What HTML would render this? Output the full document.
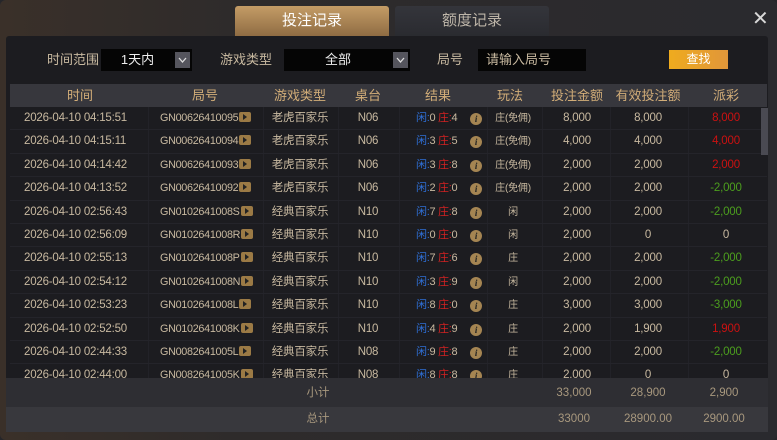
<!DOCTYPE html>
<html><head><meta charset="utf-8"><style>
*{margin:0;padding:0;box-sizing:border-box}
body{width:777px;height:440px;overflow:hidden;background:#26262a;font-family:"Liberation Sans","Noto Sans CJK SC",sans-serif;position:relative}
.outer{position:absolute;left:0;top:0;width:777px;height:440px;background:linear-gradient(90deg,#3a3029 0%,#2e2b2b 30%,#2a2a2e 100%);border-radius:6px}
.tab{position:absolute;top:6px;height:30px;width:154px;text-align:center;line-height:30px;font-size:15px;border-radius:3px 3px 0 0}
.t1{left:235px;background:linear-gradient(#c49c66,#8f6c43);color:#fff}
.t2{left:395px;background:linear-gradient(#34353b,#2a2b30);color:#bdb5a8}
.close{position:absolute;left:752px;top:6px;color:#d8d8d8;font-size:20px}
.inner{position:absolute;left:6px;top:36px;width:762px;height:396px;background:#1c1c20;border-radius:3px}
.lbl{position:absolute;top:51px;font-size:13px;color:#c8b9a0;line-height:17px}
.sel{position:absolute;top:49px;height:22px;background:#050505;color:#eee;font-size:13px;line-height:22px;text-align:center}
.dd{position:absolute;top:3px;right:2px;width:15px;height:16px;background:#55555d}
.dd svg{position:absolute;left:3px;top:5px}
.btn{position:absolute;left:669px;top:50px;width:59px;height:19px;background:linear-gradient(90deg,#efab1e,#e0963a);color:#fff;font-size:12px;text-align:center;line-height:19px}
.hdr{position:absolute;left:10px;top:84px;width:757px;height:23px;background:#37373d}
.hdr span{position:absolute;top:3px;font-size:13px;line-height:17px;color:#d2ad78;transform:translateX(-50%);white-space:nowrap}
.body{position:absolute;left:10px;top:107px;width:757px;height:271px;overflow:hidden}
.row{position:relative;height:23.4px;border-bottom:1px solid #24242a;font-size:11.5px;color:#c8b9a0;letter-spacing:-0.2px}
.row span{position:absolute;top:4px;line-height:15px;white-space:nowrap}
.c{transform:translateX(-50%)}
.gn{font-size:10.8px;letter-spacing:-0.3px}
.ic{display:inline-block;width:12px;height:10px;background:#9b7a45;border-radius:2px;vertical-align:-1px;position:relative;margin-left:1px}
.ic:after{content:"";position:absolute;left:4px;top:2px;border-left:4px solid #222;border-top:3px solid transparent;border-bottom:3px solid transparent}
.info{display:inline-block;width:12px;height:12px;border-radius:50%;background:#a58552;color:#222;font-size:9px;font-style:italic;font-weight:bold;text-align:center;line-height:12px;font-family:"Liberation Serif",serif;vertical-align:-1px}
.b{color:#2f6fd6;font-weight:normal}.r{color:#d42222;font-weight:normal}.g{color:#4c9e1e}.rd{color:#cc1111}
.res{font-size:11px;letter-spacing:-0.3px}
.sm{font-size:10px}
.vl{position:absolute;top:107px;width:1px;height:271px;background:#222228}
.scroll{position:absolute;left:761px;top:108px;width:7px;height:47px;background:#4a4a52}
.sub{position:absolute;left:6px;top:378px;width:762px;height:29px;background:#2e2e33}
.tot{position:absolute;left:6px;top:407px;width:762px;height:25px;background:#38383d}
.sub span,.tot span{position:absolute;font-size:11.5px;line-height:15px;color:#a8987e;transform:translateX(-50%)}
.sub span{top:8px}.tot span{top:5px}
</style></head><body>
<div class="outer"></div>
<div class="tab t1">投注记录</div>
<div class="tab t2">额度记录</div>
<div class="close">✕</div>
<div class="inner"></div>
<div class="lbl" style="left:47px">时间范围</div>
<div class="sel" style="left:101px;width:91px;padding-right:18px">1天内<div class="dd"><svg width="9" height="6"><path d="M1 1L4.5 5L8 1" stroke="#ddd" fill="none" stroke-width="1.3"/></svg></div></div>
<div class="lbl" style="left:220px">游戏类型</div>
<div class="sel" style="left:284px;width:126px;padding-right:18px">全部<div class="dd"><svg width="9" height="6"><path d="M1 1L4.5 5L8 1" stroke="#ddd" fill="none" stroke-width="1.3"/></svg></div></div>
<div class="lbl" style="left:437px">局号</div>
<div class="sel" style="left:478px;width:108px;text-align:left;padding-left:8px;color:#c8b9a0">请输入局号</div>
<div class="btn">查找</div>
<div class="hdr">
<span style="left:70px">时间</span><span style="left:195px">局号</span><span style="left:290px">游戏类型</span><span style="left:358px">桌台</span><span style="left:428px">结果</span><span style="left:500px">玩法</span><span style="left:567px">投注金额</span><span style="left:638px">有效投注额</span><span style="left:716px">派彩</span>
</div>
<div class="vl" style="left:148px"></div><div class="vl" style="left:263px"></div><div class="vl" style="left:338px"></div><div class="vl" style="left:399px"></div><div class="vl" style="left:487px"></div><div class="vl" style="left:542px"></div><div class="vl" style="left:610px"></div><div class="vl" style="left:688px"></div>
<div class="body">
<div class="row"><span style="left:14px">2026-04-10 04:15:51</span><span class="gn" style="left:150px">GN00626410095<i class="ic"></i></span><span class="c" style="left:290px">老虎百家乐</span><span class="c" style="left:358px">N06</span><span class="res" style="left:406px"><b class="b">闲:</b>0 <b class="r">庄:</b>4</span><span class="c" style="left:466px"><i class="info">i</i></span><span class="c sm" style="left:503px">庄(免佣)</span><span class="c" style="left:567px">8,000</span><span class="c" style="left:638px">8,000</span><span class="c rd" style="left:716px">8,000</span></div>
<div class="row"><span style="left:14px">2026-04-10 04:15:11</span><span class="gn" style="left:150px">GN00626410094<i class="ic"></i></span><span class="c" style="left:290px">老虎百家乐</span><span class="c" style="left:358px">N06</span><span class="res" style="left:406px"><b class="b">闲:</b>3 <b class="r">庄:</b>5</span><span class="c" style="left:466px"><i class="info">i</i></span><span class="c sm" style="left:503px">庄(免佣)</span><span class="c" style="left:567px">4,000</span><span class="c" style="left:638px">4,000</span><span class="c rd" style="left:716px">4,000</span></div>
<div class="row"><span style="left:14px">2026-04-10 04:14:42</span><span class="gn" style="left:150px">GN00626410093<i class="ic"></i></span><span class="c" style="left:290px">老虎百家乐</span><span class="c" style="left:358px">N06</span><span class="res" style="left:406px"><b class="b">闲:</b>3 <b class="r">庄:</b>8</span><span class="c" style="left:466px"><i class="info">i</i></span><span class="c sm" style="left:503px">庄(免佣)</span><span class="c" style="left:567px">2,000</span><span class="c" style="left:638px">2,000</span><span class="c rd" style="left:716px">2,000</span></div>
<div class="row"><span style="left:14px">2026-04-10 04:13:52</span><span class="gn" style="left:150px">GN00626410092<i class="ic"></i></span><span class="c" style="left:290px">老虎百家乐</span><span class="c" style="left:358px">N06</span><span class="res" style="left:406px"><b class="b">闲:</b>2 <b class="r">庄:</b>0</span><span class="c" style="left:466px"><i class="info">i</i></span><span class="c sm" style="left:503px">庄(免佣)</span><span class="c" style="left:567px">2,000</span><span class="c" style="left:638px">2,000</span><span class="c g" style="left:716px">-2,000</span></div>
<div class="row"><span style="left:14px">2026-04-10 02:56:43</span><span class="gn" style="left:150px">GN0102641008S<i class="ic"></i></span><span class="c" style="left:290px">经典百家乐</span><span class="c" style="left:358px">N10</span><span class="res" style="left:406px"><b class="b">闲:</b>7 <b class="r">庄:</b>8</span><span class="c" style="left:466px"><i class="info">i</i></span><span class="c sm" style="left:503px">闲</span><span class="c" style="left:567px">2,000</span><span class="c" style="left:638px">2,000</span><span class="c g" style="left:716px">-2,000</span></div>
<div class="row"><span style="left:14px">2026-04-10 02:56:09</span><span class="gn" style="left:150px">GN0102641008R<i class="ic"></i></span><span class="c" style="left:290px">经典百家乐</span><span class="c" style="left:358px">N10</span><span class="res" style="left:406px"><b class="b">闲:</b>0 <b class="r">庄:</b>0</span><span class="c" style="left:466px"><i class="info">i</i></span><span class="c sm" style="left:503px">闲</span><span class="c" style="left:567px">2,000</span><span class="c" style="left:638px">0</span><span class="c" style="left:716px">0</span></div>
<div class="row"><span style="left:14px">2026-04-10 02:55:13</span><span class="gn" style="left:150px">GN0102641008P<i class="ic"></i></span><span class="c" style="left:290px">经典百家乐</span><span class="c" style="left:358px">N10</span><span class="res" style="left:406px"><b class="b">闲:</b>7 <b class="r">庄:</b>6</span><span class="c" style="left:466px"><i class="info">i</i></span><span class="c sm" style="left:503px">庄</span><span class="c" style="left:567px">2,000</span><span class="c" style="left:638px">2,000</span><span class="c g" style="left:716px">-2,000</span></div>
<div class="row"><span style="left:14px">2026-04-10 02:54:12</span><span class="gn" style="left:150px">GN0102641008N<i class="ic"></i></span><span class="c" style="left:290px">经典百家乐</span><span class="c" style="left:358px">N10</span><span class="res" style="left:406px"><b class="b">闲:</b>3 <b class="r">庄:</b>9</span><span class="c" style="left:466px"><i class="info">i</i></span><span class="c sm" style="left:503px">闲</span><span class="c" style="left:567px">2,000</span><span class="c" style="left:638px">2,000</span><span class="c g" style="left:716px">-2,000</span></div>
<div class="row"><span style="left:14px">2026-04-10 02:53:23</span><span class="gn" style="left:150px">GN0102641008L<i class="ic"></i></span><span class="c" style="left:290px">经典百家乐</span><span class="c" style="left:358px">N10</span><span class="res" style="left:406px"><b class="b">闲:</b>8 <b class="r">庄:</b>0</span><span class="c" style="left:466px"><i class="info">i</i></span><span class="c sm" style="left:503px">庄</span><span class="c" style="left:567px">3,000</span><span class="c" style="left:638px">3,000</span><span class="c g" style="left:716px">-3,000</span></div>
<div class="row"><span style="left:14px">2026-04-10 02:52:50</span><span class="gn" style="left:150px">GN0102641008K<i class="ic"></i></span><span class="c" style="left:290px">经典百家乐</span><span class="c" style="left:358px">N10</span><span class="res" style="left:406px"><b class="b">闲:</b>4 <b class="r">庄:</b>9</span><span class="c" style="left:466px"><i class="info">i</i></span><span class="c sm" style="left:503px">庄</span><span class="c" style="left:567px">2,000</span><span class="c" style="left:638px">1,900</span><span class="c rd" style="left:716px">1,900</span></div>
<div class="row"><span style="left:14px">2026-04-10 02:44:33</span><span class="gn" style="left:150px">GN0082641005L<i class="ic"></i></span><span class="c" style="left:290px">经典百家乐</span><span class="c" style="left:358px">N08</span><span class="res" style="left:406px"><b class="b">闲:</b>9 <b class="r">庄:</b>8</span><span class="c" style="left:466px"><i class="info">i</i></span><span class="c sm" style="left:503px">庄</span><span class="c" style="left:567px">2,000</span><span class="c" style="left:638px">2,000</span><span class="c g" style="left:716px">-2,000</span></div>
<div class="row"><span style="left:14px">2026-04-10 02:44:00</span><span class="gn" style="left:150px">GN0082641005K<i class="ic"></i></span><span class="c" style="left:290px">经典百家乐</span><span class="c" style="left:358px">N08</span><span class="res" style="left:406px"><b class="b">闲:</b>8 <b class="r">庄:</b>8</span><span class="c" style="left:466px"><i class="info">i</i></span><span class="c sm" style="left:503px">庄</span><span class="c" style="left:567px">2,000</span><span class="c" style="left:638px">0</span><span class="c" style="left:716px">0</span></div>
</div>
<div class="scroll"></div>
<div class="sub"><span style="left:312px">小计</span><span style="left:568px">33,000</span><span style="left:642px">28,900</span><span style="left:718px">2,900</span></div>
<div class="tot"><span style="left:312px">总计</span><span style="left:568px">33000</span><span style="left:642px">28900.00</span><span style="left:718px">2900.00</span></div>
</body></html>
